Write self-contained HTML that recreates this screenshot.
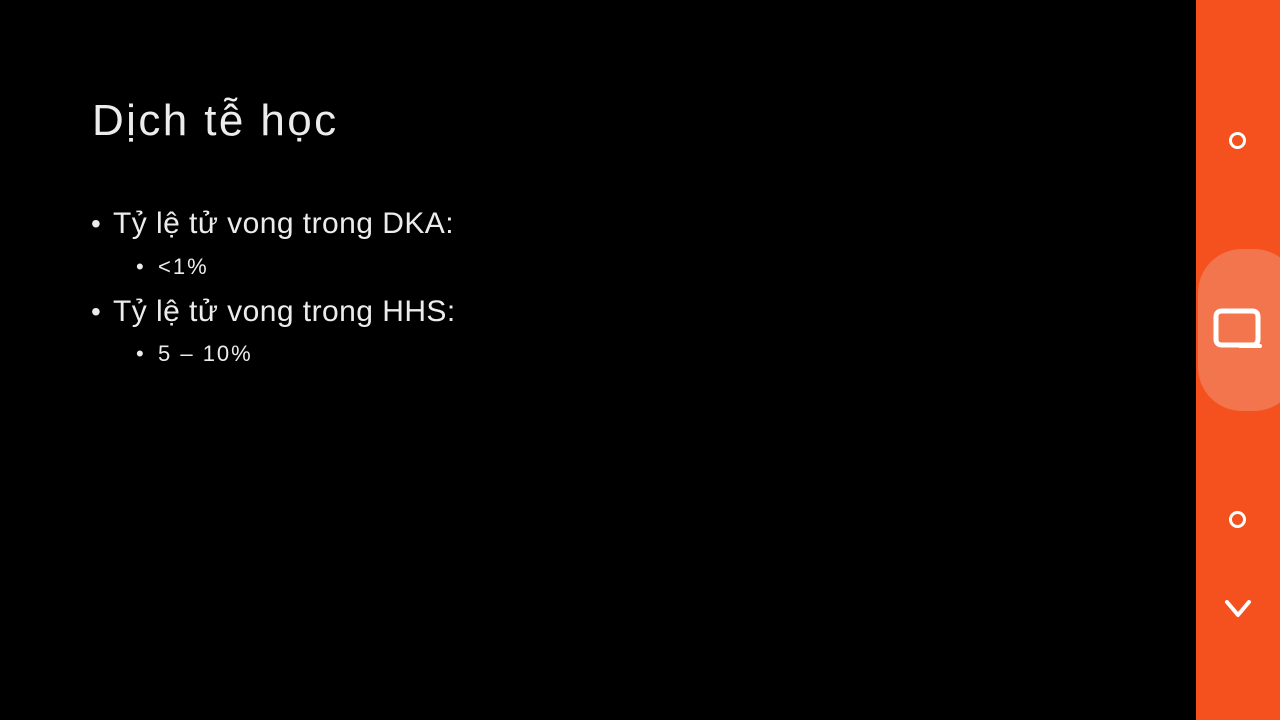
<!DOCTYPE html>
<html><head><meta charset="utf-8"><style>
html,body{margin:0;padding:0;width:1280px;height:720px;background:#000;overflow:hidden;position:relative;font-family:"Liberation Sans",sans-serif;color:#ececec}
.t{position:absolute;white-space:nowrap;line-height:1}
#side{position:absolute;left:1196px;top:0;width:84px;height:720px;background:#f4511e}
#pill{position:absolute;left:1198px;top:249px;width:100px;height:162px;border-radius:44px;background:#f3754d}
.c{position:absolute;width:11px;height:11px;border:3px solid #fff;border-radius:50%}
</style></head><body>
<div class="t" style="left:92px;top:99px;font-size:44px;letter-spacing:2.4px">Dịch tễ học</div>
<div class="t" style="left:91px;top:210px;font-size:28px">•</div>
<div class="t" style="left:113px;top:209px;font-size:30px;letter-spacing:0.45px">Tỷ lệ tử vong trong DKA:</div>
<div class="t" style="left:136px;top:256px;font-size:22px">•</div>
<div class="t" style="left:158px;top:256px;font-size:22px;letter-spacing:2px">&lt;1%</div>
<div class="t" style="left:91px;top:298px;font-size:28px">•</div>
<div class="t" style="left:113px;top:297px;font-size:30px;letter-spacing:0.45px">Tỷ lệ tử vong trong HHS:</div>
<div class="t" style="left:136px;top:343px;font-size:22px">•</div>
<div class="t" style="left:158px;top:343px;font-size:22px;letter-spacing:2px">5 – 10%</div>
<div id="side"></div>
<div id="pill"></div>
<div class="c" style="left:1229px;top:132px"></div>
<div class="c" style="left:1229px;top:511px"></div>
<svg style="position:absolute;left:1210px;top:305px" width="60" height="55" viewBox="0 0 60 55">
<path d="M12 6 H42 Q48 6 48 12 V34 Q48 40 42 40 H12 Q6 40 6 34 V12 Q6 6 12 6 Z" fill="none" stroke="#fff" stroke-width="5"/>
<path d="M30 41 H50" stroke="#fff" stroke-width="4" stroke-linecap="round"/>
</svg>
<svg style="position:absolute;left:1224px;top:598px" width="30" height="24" viewBox="0 0 30 24">
<path d="M3 4 L14 17 L25 4" fill="none" stroke="#fff" stroke-width="4" stroke-linecap="round" stroke-linejoin="round"/>
</svg>
</body></html>
